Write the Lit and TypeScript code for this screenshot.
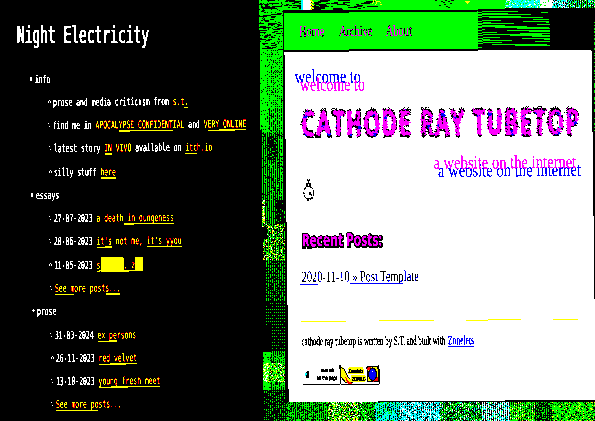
import { LitElement, html, svg, css } from "lit";
import { customElement } from "lit/decorators.js";

// Row segments: [kind, text]; w = plain, y = link, u = underlined link, b = solid block
type Seg = [string, string];
type Row = { left: number; bullet: string; segs: Seg[] };

const rows: Row[] = [
  { left: 35, bullet: "sq", segs: [["w", "info"]] },
  { left: 52.5, bullet: "ring", segs: [["w", "prose and media criticism from "], ["y", "s.t"], ["u", "."]] },
  { left: 53, bullet: "dots", segs: [["w", "find me in "], ["y", "APOCAL"], ["u", "YPSE CONFIDENT"], ["y", "IAL"], ["w", " and "], ["y", "V"], ["u", "ERY ONLINE"]] },
  { left: 53.5, bullet: "dots", segs: [["w", "latest story "], ["u", "IN"], ["y", " VIVO"], ["w", " available on "], ["u", "itc"], ["y", "h.io"]] },
  { left: 53.5, bullet: "ring", segs: [["w", "silly stuff "], ["u", "here"]] },
  { left: 36, bullet: "sq", segs: [["w", "essays"]] },
  { left: 54, bullet: "dots", segs: [["w", "27-07-2023 "], ["y", "a death"], ["u", " in dungeness"]] },
  { left: 54, bullet: "dots", segs: [["w", "20-06-2023 "], ["u", "it's"], ["y", " not me, "], ["u", "it's yyou"]] },
  { left: 54, bullet: "ring", segs: [["w", "11-05-2023 "], ["u", "s"], ["b", "      "], ["u", ". z"], ["b", "  "]] },
  { left: 55, bullet: "dots", segs: [["u", "See m"], ["y", "ore post"], ["u", "s..."]] },
  { left: 37, bullet: "dia", segs: [["w", "prose"]] },
  { left: 55, bullet: "dots", segs: [["w", "31-03-2024 "], ["u", "ex pe"], ["y", "rsons"]] },
  { left: 55.5, bullet: "ring", segs: [["w", "26-11-2023 "], ["u", "red velvet"]] },
  { left: 55.5, bullet: "dots", segs: [["w", "13-10-2023 "], ["u", "young fresh meet"]] },
  { left: 56, bullet: "dots", segs: [["u", "See more po"], ["y", "sts..."]] },
];

const bullets: Record<string, string> = {
  sq: "M0 2h2v4h-2z",
  dia: "M0 3h1v-1h1v1h1v1h-1v1h-1v-1h-1z",
  ring: "M0 3h1v2h-1zM1 2h1v1h-1zM2 3h1v2h-1z",
  dots: "M0 2h1v1h-1zM1 5h1v1h-1z",
};

// Header interlace: [y, start, end] in thirds of a pixel
const scan: number[][] = [
  [34, 158, 279], [37, 348, 369], [40, 158, 249], [43, 158, 318], [49, 158, 288], [52, 192, 354],
  [58, 324, 372], [61, 158, 228], [64, 294, 372], [67, 158, 198], [67, 363, 372], [70, 158, 264],
  [73, 333, 372], [76, 158, 237], [79, 158, 303], [82, 207, 369], [85, 273, 372], [88, 158, 177],
  [91, 243, 372], [94, 309, 372], [97, 158, 213], [100, 282, 372], [103, 158, 348], [106, 252, 372],
  [109, 318, 372], [112, 158, 222], [115, 288, 372], [118, 158, 192], [118, 354, 372], [121, 158, 258],
  [124, 327, 372], [127, 158, 228], [133, 198, 363], [136, 267, 372], [139, 158, 168],
];

// mulberry32
let seed = 7;
const rnd = () => {
  seed = (seed + 0x6d2b79f5) | 0;
  let t = Math.imul(seed ^ (seed >>> 15), 1 | seed);
  t = (t + Math.imul(t ^ (t >>> 7), 61 | t)) ^ t;
  return ((t ^ (t >>> 14)) >>> 0) / 4294967296;
};

type Weights = Record<string, number>;
function pick(w: Weights): string {
  let r = rnd();
  for (const k of Object.keys(w)) if ((r -= w[k]) < 0) return k;
  return "";
}

// Dithered wallpaper as runs of [colour, path]
function wallpaper() {
  const out: [string, string][] = [];
  const put = (c: string, x: number, y: number, n = 1) => {
    if (!c) return;
    const d = `M${x} ${y}h${n}v1h${-n}z`;
    const last = out[out.length - 1];
    if (last && last[0] === c) last[1] += d;
    else out.push([c, d]);
  };
  const G = "#0f0", Y = "#ff0", W = "#fff", C = "#0ff", K = "#000";
  // side strip
  for (let y = 0; y < 421; y++) {
    const x0 = y < 30 ? 259 : y < 130 ? 260 : y < 230 ? 262 : 263;
    const x1 = y < 200 ? 283 : y < 403 ? 285 : 287;
    for (let x = x0; x < x1; x++) {
      const odd = x % 2 === 0;
      let w: Weights;
      if (y < 15) w = odd || y % 3 ? { [G]: 0.95 } : { [G]: 0.7 };
      else if (y < 50) w = { [G]: 0.94 };
      else if (y < 108) w = odd ? { [G]: 0.96 } : { [G]: x > 266 ? (y % 2 ? 0.9 : 0.4) : 0.9 };
      else if (y < 133) w = odd ? { [G]: 0.95 } : { [G]: x < 268 ? 0.75 : 0.35 };
      else if (y < 200) w = odd ? { [G]: y > 135 && y < 160 && x > 266 && x < 277 ? 0.3 : 0.85 } : { [G]: x > 279 ? 0.4 : 0.04 };
      else if (y < 224) w = x < 265 ? { [W]: 0.25, [Y]: 0.3, [G]: 0.3 } : odd ? { [G]: x > 274 ? 0.15 : 0.85 } : {};
      else if (y < 260) w = y > 226 && y < 239 && x < 267 ? {} : { [Y]: 0.13, [W]: 0.07, [G]: odd ? 0.55 : 0.1 };
      else if (y < 300) w = odd && x > 265 ? { [G]: y % 3 ? 0.7 : 0.2 } : {};
      else if (y < 352) w = odd && y % 3 === 0 && x > (y > 325 ? 270 : 264) ? { [G]: 0.8 } : {};
      else if (y < 390) w = y > 362 && y < 382 ? { [W]: x < 268 ? 0.3 : 0.1, [Y]: 0.17, [G]: 0.5 } : x < 270 ? { [G]: 0.9 } : { [G]: odd ? 0.85 : 0.25 };
      else w = odd ? { [G]: y % 2 ? 0.55 : 0.2 } : {};
      put(pick(w), x, y);
    }
  }
  for (let i = 0; i < 95; i++) {
    const y = Math.floor(rnd() * 50);
    put(K, 259 + Math.floor(rnd() * 20), y, 2 + Math.floor(rnd() * 5));
  }
  // top band
  for (let y = 0; y < 10; y++) {
    put(G, 283, y, 312);
    for (let x = 505; x < 595; x++) {
      const w: Weights =
        x < 540 ? { [C]: Math.min(0.75, (x - 500) / 22), [W]: 0.12 }
        : x < 552 ? { [W]: 0.93 }
        : x < 567 ? { [C]: 0.5, [W]: 0.2, [K]: 0.2 }
        : { [K]: x % 2 ? 0.75 : 0.1, [C]: 0.2, [W]: 0.12 };
      if (y < 8) put(pick(w), x, y);
      else put(K, x, y);
    }
  }
  for (let i = 0; i < 75; i++) put(K, 284 + Math.floor(rnd() * 84), Math.floor(rnd() * 10), 2 + Math.floor(rnd() * 10));
  for (let y = 0; y < 10; y++) {
    put(C, 301, y, 3);
    put(W, 303, y, 8);
    put(Y, 310 + (y % 3), y, 2);
  }
  for (let i = 0; i < 16; i++) put(Y, 372 + Math.floor(rnd() * 10), Math.floor(rnd() * 5), 1);
  for (let i = 0; i < 12; i++) put(K, 435 + Math.floor(rnd() * 18), Math.floor(rnd() * 8), 2);
  put(Y, 465, 1, 5);
  put(Y, 466, 2, 3);
  put(Y, 467, 3, 1);
  // bottom band
  for (let y = 402; y < 421; y++)
    for (let x = 287; x < 595; x++) {
      const o = x % 2 === 0;
      let w: Weights;
      if (x < 328) w = o ? { [G]: 0.8 } : { [G]: 0.22 };
      else if (x < 358) w = { [Y]: 0.2, [W]: 0.16, [G]: 0.35 };
      else if (x < 375) w = { [G]: 0.48, [W]: 0.06 };
      else if (x < 400) w = o ? { [C]: 0.75, [G]: 0.2 } : { [C]: 0.35, [G]: 0.2 };
      else if (x < 440) w = o ? { [C]: 0.5, [W]: 0.38 } : { [C]: 0.45, [W]: 0.1 };
      else if (x < 482) w = o ? { [W]: 0.22, [G]: 0.3, [C]: 0.15 } : { [G]: 0.4, [C]: 0.05 };
      else if (x < 510) w = o ? { [W]: 0.75, [C]: 0.15 } : { [C]: 0.3, [G]: 0.12 };
      else if (x < 535) w = o ? { [G]: 0.6, [Y]: 0.2, [W]: 0.1 } : { [G]: 0.5 };
      else if (x < 552) w = o ? { [G]: 0.55 } : { [G]: 0.15 };
      else w = { [G]: 0.64, [Y]: 0.1 };
      put(pick(w), x, y);
    }
  // right sliver
  for (let y = 22; y < 198; y++)
    put(pick(y > 150 ? { [Y]: y > 166 ? 0.35 : 0, [G]: 0.55 } : { [G]: 0.4 }), 594, y);
  return out.map(([c, d]) => svg`<path fill=${c} d=${d}></path>`);
}

@customElement("app-root")
export class AppRoot extends LitElement {
  static styles = css`
    :host { display: block; width: 595px; height: 421px; overflow: hidden; background: #000; position: relative; }
    .defs { position: absolute; width: 0; height: 0; }
    .wall { position: absolute; inset: 0; display: block; }
    .stage { position: relative; display: grid; grid-template-columns: 259px 336px; height: 421px; }
    .journal { color: #fff; font-family: "DejaVu Sans Mono", monospace; filter: url(#crispLight); z-index: 1; }
    h1 { margin: 0; padding: 22px 0 0 16.5px; height: 45px; font-size: 22px; line-height: 28px; font-weight: 400; white-space: pre; -webkit-text-stroke: 0.5px #fff; }
    h1 span { display: inline-block; transform: scale(0.586, 1.06); transform-origin: 0 50%; }
    ul { list-style: none; margin: 0; padding: 0; }
    li { height: 23.27px; display: flex; align-items: center; white-space: pre; font-size: 10.6px; line-height: 14px; }
    .bullet { width: 3px; height: 8px; margin-left: -5px; margin-right: 2px; flex: none; }
    .row { display: inline-block; transform: scaleX(0.606) skewY(-0.3deg); transform-origin: 0 50%; -webkit-text-stroke-width: 0.1px; }
    .y, .u { color: #ffb000; }
    .u { text-decoration: underline; text-decoration-color: #ff0; text-decoration-thickness: 1px; text-underline-offset: 2px; text-decoration-skip-ink: none; }
    .b { background: #ff0; display: inline-block; height: 14px; vertical-align: top; }
    .screen { padding: 11px 0 0 24px; filter: url(#crisp); }
    .page { width: 310px; height: 391px; background: #000; transform: matrix(1, -0.0075, 0.012, 1, 0, 0); transform-origin: 0 0; box-sizing: border-box; padding: 2px 0 0 1px; }
    header { height: 37px; display: flex; }
    nav { width: 194px; background: #0f0; }
    .paper { background: #fff; width: 307px; margin-top: 2px; height: 350px; }
    svg { display: block; overflow: visible; }
    .serif { font-family: "Liberation Serif", serif; }
    .sans { font-family: "Open Sans", sans-serif; font-weight: 600; letter-spacing: 4px; }
    .head { font-family: "Noto Sans", sans-serif; font-weight: 700; }
    .tiny { font-family: "Liberation Sans", sans-serif; font-weight: 700; font-size: 6px; }
  `;

  private t(s: string, x: number, y: number, w: number, size: number, fill: string, cls = "serif") {
    return svg`<text class=${cls} x=${x} y=${y} textLength=${w} lengthAdjust="spacingAndGlyphs" font-size=${size} fill=${fill}>${s}</text>`;
  }

  render() {
    return html`
      <svg class="defs">
        <filter id="crisp" x="0" y="0" width="1" height="1" color-interpolation-filters="sRGB">
          <feComponentTransfer><feFuncR type="discrete" tableValues="0 1" /><feFuncG type="discrete" tableValues="0 1" /><feFuncB type="discrete" tableValues="0 1" /><feFuncA type="discrete" tableValues="0 1" /></feComponentTransfer>
        </filter>
        <filter id="crispLight" x="0" y="0" width="1" height="1" color-interpolation-filters="sRGB">
          <feFlood flood-color="#000" result="k" /><feComposite in="SourceGraphic" in2="k" operator="over" />
          <feComponentTransfer><feFuncR type="discrete" tableValues="0 0 1 1 1" /><feFuncG type="discrete" tableValues="0 0 1 1 1" /><feFuncB type="discrete" tableValues="0 0 1 1 1" /></feComponentTransfer>
        </filter>
      </svg>
      <svg class="wall" width="595" height="421" shape-rendering="crispEdges">${wallpaper()}</svg>
      <div class="stage">
        <section class="journal">
          <h1><span>Night Electricity</span></h1>
          <ul>
            ${rows.map((r) => html`<li style="padding-left:${r.left}px"><svg class="bullet" fill="#fff"><path d=${bullets[r.bullet]}></path></svg><span class="row">${r.segs.map(([k, s]) => html`<span class=${k}>${s}</span>`)}</span></li>`)}
          </ul>
        </section>
        <section class="screen">
          <div class="page">
            <header>
              <nav>
                <svg width="194" height="37">
                  <g stroke="#c010c0" stroke-width="0.25">
                    ${this.t("Home", 15, 23.5, 25, 15.5, "#c010c0")}
                    ${this.t("Archive", 55, 23.5, 33, 15.5, "#c010c0")}
                    ${this.t("About", 101.5, 23.5, 26, 15.5, "#c010c0")}
                  </g>
                </svg>
              </nav>
              <svg width="71" height="37" shape-rendering="crispEdges">
                ${scan.map(([y, a, b]) => svg`<rect x=${(a - 158) / 3} y=${(y - 34) / 3} width=${(b - a) / 3} height="1" fill="#0f0"></rect>`)}
              </svg>
            </header>
            <div class="paper">
              <svg width="307" height="50">
                <g stroke-width="0.15">
                  <g stroke="#00d">${this.t("welcome to", 10, 31, 66, 19, "#00d")}</g>
                  <g stroke="#f0f">${this.t("welcome to", 15, 39, 65, 19, "#f0f")}</g>
                </g>
              </svg>
              <svg width="307" height="40">
                <defs>
                  <pattern id="blotch" width="23" height="19" patternUnits="userSpaceOnUse">
                    <rect width="23" height="19" fill="#f0f" />
                    <path fill="#00f" d="M2 3h3v2h-1v3h-2zM12 1h2v4h-3zM17 11h3v4h-2zM6 14h3v2h-3z" />
                    <path fill="#fff" d="M9 5h1v3h-1zM15 8h2v1h-2zM4 11h1v2h-1z" />
                    <path fill="#0ff" d="M20 6h1v2h-1z" />
                  </pattern>
                  <filter id="rough" x="-5%" y="-20%" width="110%" height="140%">
                    <feTurbulence type="turbulence" baseFrequency="0.5" numOctaves="2" seed="4" result="n" />
                    <feDisplacementMap in="SourceGraphic" in2="n" scale="3.5" xChannelSelector="R" yChannelSelector="G" />
                  </filter>
                </defs>
                <g filter="url(#rough)">
                  <g stroke="#000" stroke-width="4" stroke-linejoin="round">${this.t("CATHODE RAY TUBETOP", 15, 33, 279, 34, "#000", "sans")}</g>
                  ${this.t("CATHODE RAY TUBETOP", 15, 33, 279, 34, "url(#blotch)", "sans")}
                </g>
              </svg>
              <svg width="307" height="38">
                <g stroke-width="0.15">
                  <g stroke="#00d">${this.t("a website on the internet", 152, 36, 143, 19, "#00d")}</g>
                  <g stroke="#f0f">${this.t("a website on the internet", 147.5, 28, 143, 19, "#f0f")}</g>
                </g>
              </svg>
              <svg width="307" height="50">
                <g fill="none" stroke="#000" stroke-width="1.2" transform="translate(17.5 -1)">
                  <path d="M3.5 0.5l1 2M6.5 0.5l-1 2M5 2v3M3.5 4.5h3v3h-3z" />
                  <ellipse cx="5" cy="14" rx="4.8" ry="6.5" stroke-dasharray="3 1" />
                  <path d="M6 13l2 4M6 13v3M2 19.5h7M3 21.5h2M6.5 21h1" />
                </g>
              </svg>
              <svg width="307" height="34">
                <g stroke="#000" stroke-width="3.4">
                  ${this.t("Recent Posts:", 15.5, 17, 80, 17.5, "#000", "head")}
                </g>
                <g stroke="#f0f" stroke-width="0.2">${this.t("Recent Posts:", 15, 16.3, 80, 17.5, "#f0f", "head")}</g>
              </svg>
              <svg width="307" height="56">
                <g stroke="#113" stroke-width="0.15">${this.t("2020-11-10 » Post Template", 14.5, 18, 117, 15.5, "#113")}</g>
                <path fill="#00f" d="M13 20h18v1h-18zM62 20h54v1h-54z" />
              </svg>
              <svg width="307" height="14">
                <path fill="#ff0" d="M13 1h46v1h-46zM91.5 1h55v1h-55zM178.5 1h55v1h-55zM265.5 1h25v1h-25z" />
              </svg>
              <svg width="307" height="31">
                <g stroke="#000" stroke-width="0.4">${this.t("cathode ray tubetop is written by S.T. and built with", 13.5, 11.5, 143.5, 12.5, "#000")}</g>
                <g stroke="#00c" stroke-width="0.3">${this.t("Zonelets", 160, 11.5, 26, 12.5, "#00c")}</g>
                <path fill="#00f" d="M160 13h26v1h-26z" />
              </svg>
              <svg width="307" height="30">
                <g transform="translate(-0.8 0)">
                  <path d="M15 20h37M53.5 20h38M91.5 0v20M52.5 0v20" stroke="#000" fill="none" />
                  <path d="M18 8l3-2v7l-2 1-1-2z" fill="#000" /><path d="M18 8h1v3h-1z" fill="#0ff" />
                  <g stroke="#000" stroke-width="0.3">
                    ${this.t("made with", 33, 7.5, 14, 5.5, "#000", "tiny")}
                    ${this.t("on the page", 29, 15, 21, 6.5, "#000", "tiny")}
                  </g>
                  <path d="M53 2l4 3 3 7 5 6h-7l-5-6z" fill="#ff0" stroke="#000" /><path d="M56 9l5 8 5 2h-6z" fill="#f00" />
                  <path d="M61 3h15v6.500h-15zM63 11h15v6h-15z" fill="#ff0" />
                  <g stroke="#000" stroke-width="0.3">
                    ${this.t("Zonelets", 61, 8.5, 15, 6.5, "#000", "tiny")}
                    ${this.t("ZONED", 64, 16.5, 14, 6.5, "#000", "tiny")}
                  </g>
                  <rect x="79.5" y="2.5" width="11" height="15" fill="#ff0" stroke="#000" />
                  <path d="M85 13h5v4h-5zM80 3h3v2h-3z" fill="#f00" />
                  <ellipse cx="85" cy="10" rx="4" ry="6" fill="#00f" stroke="#000" />
                  <path d="M84 6h1v2h-1z" fill="#fff" />
                </g>
              </svg>
            </div>
          </div>
        </section>
      </div>
    `;
  }
}
